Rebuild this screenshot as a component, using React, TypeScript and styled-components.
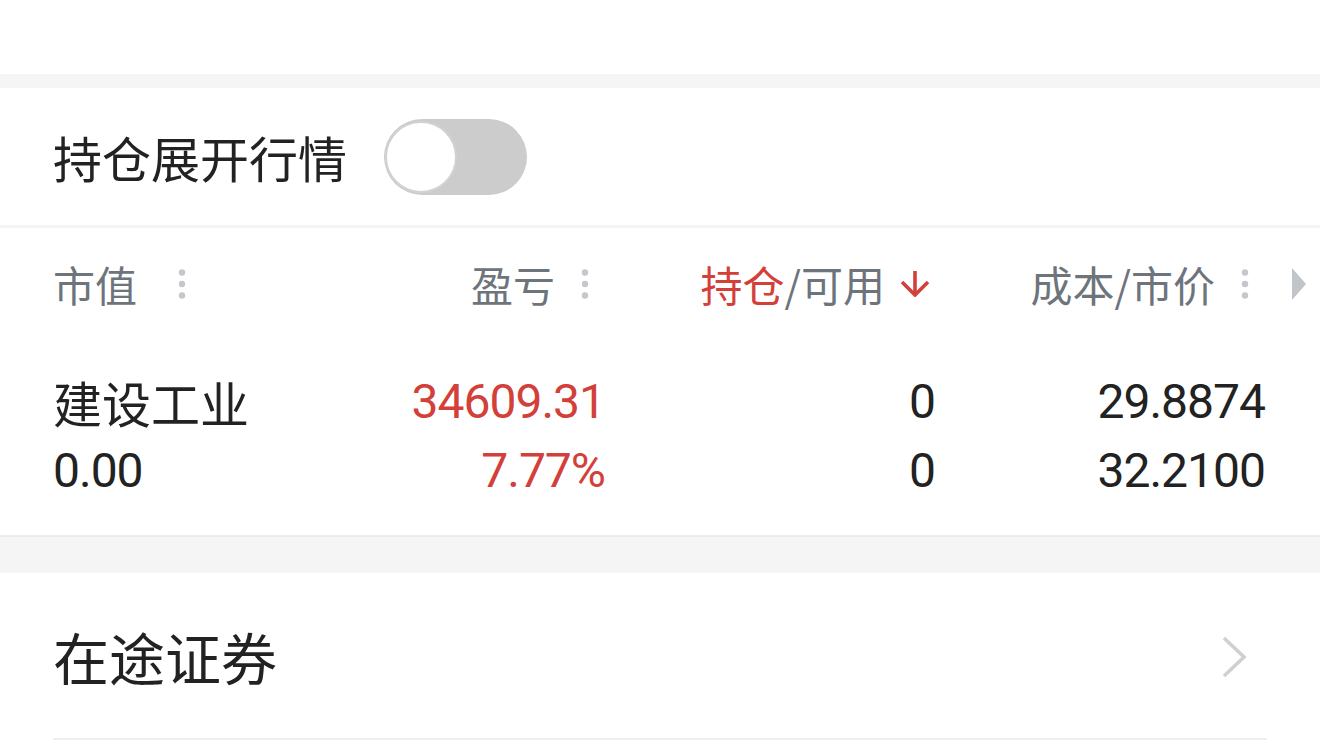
import React, { useState } from "react";
import styled, { createGlobalStyle } from "styled-components";

const GlobalStyle = createGlobalStyle`
  html, body {
    margin: 0;
    padding: 0;
    background: #ffffff;
  }
  body {
    font-family: Roboto, "Noto Sans CJK SC", sans-serif;
    color: #222222;
  }
`;

const RED = "#d3403a";
const GRAY_TEXT = "#6e747b";
const CJK = `"Noto Sans CJK SC", "Noto Sans", sans-serif`;
const NUM = `Roboto, "Noto Sans CJK SC", sans-serif`;

const Page = styled.div`
  width: 1320px;
  min-height: 748px;
  display: flex;
  flex-direction: column;
  background: #ffffff;
`;

const TopBar = styled.div`
  height: 74px;
  background: #ffffff;
`;

const Spacer = styled.div<{ h: number; border?: boolean }>`
  height: ${({ h }) => h}px;
  background: #f5f5f5;
  border-top: ${({ border }) => (border ? "2px solid #ececec" : "none")};
`;

const ToggleRow = styled.div`
  height: 137px;
  display: flex;
  align-items: center;
  gap: 37px;
  padding-left: 53px;
  border-bottom: 3px solid #f4f4f4;
`;

const ToggleLabel = styled.span`
  font-family: ${CJK};
  font-size: 49px;
  color: #222222;
  line-height: 1;
`;

const Track = styled.button<{ on: boolean }>`
  position: relative;
  width: 143px;
  height: 76px;
  border: none;
  padding: 0;
  border-radius: 38px;
  background: ${({ on }) => (on ? RED : "#cccccc")};
  cursor: pointer;
`;

const Knob = styled.span<{ on: boolean }>`
  position: absolute;
  top: 2px;
  left: ${({ on }) => (on ? "69px" : "1px")};
  width: 68px;
  height: 68px;
  border-radius: 50%;
  background: #ffffff;
  border: 2px solid #d2d2d2;
  transition: left 0.2s;
`;

const Grid = styled.div`
  display: grid;
  grid-template-columns: 222px 330px 330px 330px 55px;
  padding-left: 53px;
`;

const HeaderRow = styled(Grid)`
  height: 112px;
  align-items: center;
`;

const HeadCell = styled.div<{ align: "left" | "right" }>`
  display: flex;
  align-items: center;
  justify-content: ${({ align }) => (align === "left" ? "flex-start" : "flex-end")};
  font-family: ${CJK};
  font-size: 42px;
  line-height: 1;
  color: ${GRAY_TEXT};
`;

const Red = styled.span`
  color: ${RED};
`;

const IconBox = styled.span<{ gap: number }>`
  width: 40px;
  height: 40px;
  margin-left: ${({ gap }) => gap}px;
  display: flex;
  align-items: center;
  justify-content: center;
`;

const DataRow = styled(Grid)`
  padding-top: 27px;
  padding-bottom: 30px;
`;

const DataCell = styled.div<{ align: "left" | "right" }>`
  display: flex;
  flex-direction: column;
  align-items: ${({ align }) => (align === "left" ? "flex-start" : "flex-end")};
`;

const Line = styled.span<{ red?: boolean; cjk?: boolean }>`
  height: 69px;
  display: flex;
  align-items: center;
  font-family: ${({ cjk }) => (cjk ? CJK : NUM)};
  font-size: ${({ cjk }) => (cjk ? "49px" : "48px")};
  letter-spacing: ${({ cjk }) => (cjk ? "0" : "-1px")};
  color: ${({ red }) => (red ? RED : "#222222")};
`;

const LinkRow = styled.div`
  height: 165px;
  margin: 0 53px;
  display: flex;
  align-items: center;
  justify-content: space-between;
  border-bottom: 2px solid #efefef;
  cursor: pointer;
`;

const LinkText = styled.span`
  font-family: ${CJK};
  font-size: 56px;
  line-height: 1;
  color: #222222;
`;

const ChevronBox = styled.span`
  display: flex;
  margin-right: 20px;
  margin-top: 2px;
`;

const CaretCell = styled.div`
  display: flex;
  align-items: center;
  padding-left: 27px;
`;

const Dots = () => (
  <svg width="8" height="32" viewBox="0 0 8 32">
    <circle cx="4" cy="4.5" r="3.2" fill="#c4c7cb" />
    <circle cx="4" cy="16" r="3.2" fill="#c4c7cb" />
    <circle cx="4" cy="27.5" r="3.2" fill="#c4c7cb" />
  </svg>
);

const DownArrow = () => (
  <svg width="30" height="26" viewBox="0 0 30 26" style={{ flexShrink: 0 }}>
    <path d="M15 0 V23" stroke={RED} strokeWidth="3.6" fill="none" />
    <path d="M2 11 L15 24 L28 11" stroke={RED} strokeWidth="3.6" fill="none" />
  </svg>
);

const Caret = () => (
  <svg width="14" height="32" viewBox="0 0 14 32">
    <path d="M0 0 L14 16 L0 32 Z" fill="#c1c4c8" />
  </svg>
);

const Chevron = () => (
  <svg width="26" height="42" viewBox="0 0 26 42">
    <path d="M3 2 L23 21 L3 40" stroke="#d0d0d0" strokeWidth="3.6" fill="none" />
  </svg>
);

const App = () => {
  const [expanded, setExpanded] = useState(false);

  return (
    <Page>
      <GlobalStyle />
      <TopBar />
      <Spacer h={14} />
      <ToggleRow>
        <ToggleLabel>持仓展开行情</ToggleLabel>
        <Track on={expanded} onClick={() => setExpanded(!expanded)}>
          <Knob on={expanded} />
        </Track>
      </ToggleRow>

      <HeaderRow>
        <HeadCell align="left">
          市值
          <IconBox gap={25}>
            <Dots />
          </IconBox>
        </HeadCell>
        <HeadCell align="right">
          盈亏
          <IconBox gap={10}>
            <Dots />
          </IconBox>
        </HeadCell>
        <HeadCell align="right">
          <Red>持仓</Red>/可用
          <IconBox gap={10}>
            <DownArrow />
          </IconBox>
        </HeadCell>
        <HeadCell align="right">
          成本/市价
          <IconBox gap={10}>
            <Dots />
          </IconBox>
        </HeadCell>
        <CaretCell>
          <Caret />
        </CaretCell>
      </HeaderRow>

      <DataRow>
        <DataCell align="left">
          <Line cjk>建设工业</Line>
          <Line>0.00</Line>
        </DataCell>
        <DataCell align="right">
          <Line red>34609.31</Line>
          <Line red>7.77%</Line>
        </DataCell>
        <DataCell align="right">
          <Line>0</Line>
          <Line>0</Line>
        </DataCell>
        <DataCell align="right">
          <Line>29.8874</Line>
          <Line>32.2100</Line>
        </DataCell>
      </DataRow>

      <Spacer h={36} border />

      <LinkRow>
        <LinkText>在途证券</LinkText>
        <ChevronBox>
          <Chevron />
        </ChevronBox>
      </LinkRow>
    </Page>
  );
};

export default App;
